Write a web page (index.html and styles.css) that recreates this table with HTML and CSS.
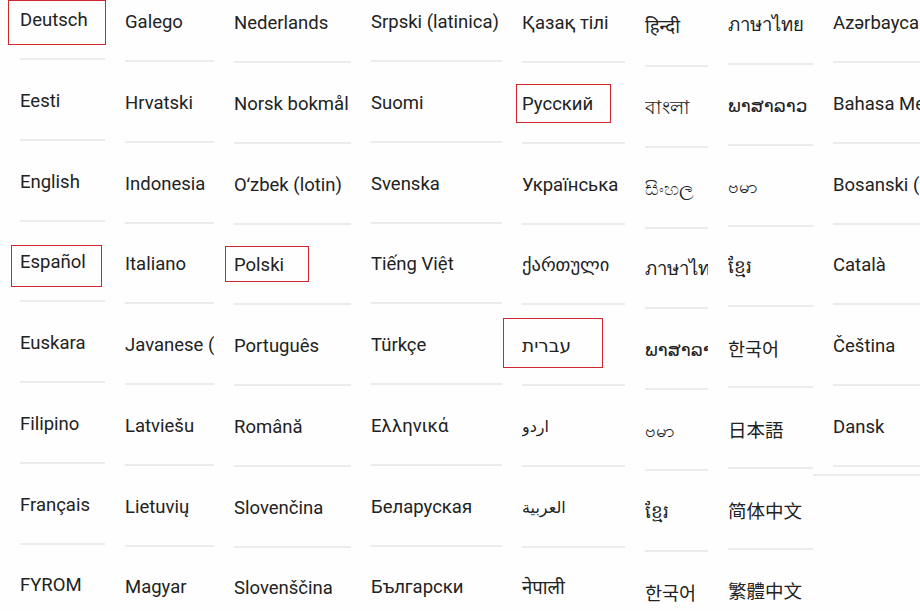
FILE: index.html
```html
<!DOCTYPE html>
<html lang="en">
<head>
<meta charset="utf-8">
<title>Languages</title>
<link rel="stylesheet" href="styles.css">
</head>
<body>
<div class="grid">
  <div class="col c1">
    <div class="row"><span class="label">Deutsch</span><span class="mark m-deutsch"></span></div>
    <div class="row"><span class="label">Eesti</span></div>
    <div class="row"><span class="label">English</span></div>
    <div class="row"><span class="label">Español</span><span class="mark m-espanol"></span></div>
    <div class="row"><span class="label">Euskara</span></div>
    <div class="row"><span class="label">Filipino</span></div>
    <div class="row"><span class="label">Français</span></div>
    <div class="row"><span class="label">FYROM</span></div>
  </div>
  <div class="col c2">
    <div class="row"><span class="label">Galego</span></div>
    <div class="row"><span class="label">Hrvatski</span></div>
    <div class="row"><span class="label">Indonesia</span></div>
    <div class="row"><span class="label">Italiano</span></div>
    <div class="row"><span class="label">Javanese (Indonesia)</span></div>
    <div class="row"><span class="label">Latviešu</span></div>
    <div class="row"><span class="label">Lietuvių</span></div>
    <div class="row"><span class="label">Magyar</span></div>
  </div>
  <div class="col c3">
    <div class="row"><span class="label">Nederlands</span></div>
    <div class="row"><span class="label">Norsk bokmål</span></div>
    <div class="row"><span class="label">Oʻzbek (lotin)</span></div>
    <div class="row"><span class="label">Polski</span><span class="mark m-polski"></span></div>
    <div class="row"><span class="label">Português</span></div>
    <div class="row"><span class="label">Română</span></div>
    <div class="row"><span class="label">Slovenčina</span></div>
    <div class="row"><span class="label">Slovenščina</span></div>
  </div>
  <div class="col c4">
    <div class="row"><span class="label">Srpski (latinica)</span></div>
    <div class="row"><span class="label">Suomi</span></div>
    <div class="row"><span class="label">Svenska</span></div>
    <div class="row"><span class="label">Tiếng Việt</span></div>
    <div class="row"><span class="label">Türkçe</span></div>
    <div class="row"><span class="label">Ελληνικά</span></div>
    <div class="row"><span class="label">Беларуская</span></div>
    <div class="row"><span class="label">Български</span></div>
  </div>
  <div class="col c5">
    <div class="row"><span class="label">Қазақ тілі</span></div>
    <div class="row"><span class="label">Русский</span><span class="mark m-russian"></span></div>
    <div class="row"><span class="label">Українська</span></div>
    <div class="row"><span class="label">ქართული</span></div>
    <div class="row"><span class="label">עברית</span><span class="mark m-hebrew"></span></div>
    <div class="row"><span class="label small">اردو</span></div>
    <div class="row"><span class="label small">العربية</span></div>
    <div class="row"><span class="label">नेपाली</span></div>
  </div>
  <div class="col c6">
    <div class="row"><span class="label">हिन्दी</span></div>
    <div class="row"><span class="label">বাংলা</span></div>
    <div class="row"><span class="label">සිංහල</span></div>
    <div class="row"><span class="label">ภาษาไทย</span></div>
    <div class="row"><span class="label lo">ພາສາລາວ</span></div>
    <div class="row"><span class="label">ဗမာ</span></div>
    <div class="row"><span class="label">ខ្មែរ</span></div>
    <div class="row"><span class="label kr">한국어</span></div>
  </div>
  <div class="col c7">
    <div class="row"><span class="label">ภาษาไทย</span></div>
    <div class="row"><span class="label lo">ພາສາລາວ</span></div>
    <div class="row"><span class="label">ဗမာ</span></div>
    <div class="row"><span class="label">ខ្មែរ</span></div>
    <div class="row"><span class="label kr">한국어</span></div>
    <div class="row"><span class="label jp">日本語</span></div>
    <div class="row"><span class="label sc">简体中文</span></div>
    <div class="row"><span class="label tc">繁體中文</span></div>
  </div>
  <div class="col c8">
    <div class="row"><span class="label">Azərbaycan</span></div>
    <div class="row"><span class="label">Bahasa Melayu</span></div>
    <div class="row"><span class="label">Bosanski (latinica)</span></div>
    <div class="row"><span class="label">Català</span></div>
    <div class="row"><span class="label">Čeština</span></div>
    <div class="row"><span class="label">Dansk</span></div>
  </div>
</div>
</body>
</html>
```
FILE: styles.css
```css
html, body {
  margin: 0;
  padding: 0;
  background: #fefefe;
  overflow: hidden;
}
body {
  width: 920px;
  height: 611px;
  font-family: Roboto, "Noto Sans", "DejaVu Sans", "Noto Sans CJK KR", sans-serif;
  font-size: 18.5px;
  color: #222222;
}
.grid {
  display: flex;
  align-items: flex-start;
  gap: 20px;
  padding-left: 20px;
}
.col {
  display: flex;
  flex-direction: column;
  flex: none;
}
.row {
  position: relative;
  box-sizing: border-box;
  height: 80.75px;
  padding-bottom: 28px;
  border-bottom: 2px solid #ececec;
  display: flex;
  align-items: flex-end;
}
.label {
  display: block;
  width: 100%;
  line-height: 20px;
  white-space: nowrap;
  overflow: hidden;
  padding: 10px 0;
  margin: -10px 0;
}
.small { font-size: 16px; }
.lo { font-family: "DejaVu Sans", "Noto Sans", sans-serif; font-weight: 400; }
.kr { font-family: "Noto Sans CJK KR", sans-serif; }
.jp { font-family: "Noto Sans CJK JP", sans-serif; }
.sc { font-family: "Noto Sans CJK SC", sans-serif; }
.tc { font-family: "Noto Sans CJK TC", sans-serif; }

.c1 { width: 85px; margin-top: -20.75px; }
.c2 { width: 89px; margin-top: -18.75px; }
.c3 { width: 117px; margin-top: -17.75px; }
.c4 { width: 131px; margin-top: -18.75px; }
.c5 { width: 103px; margin-top: -17.75px; }
.c6 { width: 63px; margin-top: -13.75px; }
.c7 { width: 85px; margin-top: -15.75px; }
.c8 {
  flex: 1;
  margin-top: -17.75px;
  margin-left: -20px;
  padding-left: 20px;
  padding-bottom: 7px;
  border-bottom: 2px solid #ececec;
}

.mark {
  position: absolute;
  box-sizing: border-box;
  border: 1px solid #d0262d;
}
.m-deutsch { left: -12px; top: 20.75px; width: 98px; height: 45px; }
.m-espanol { left: -9px; top: 23.5px; width: 91px; height: 42px; }
.m-polski { left: -9px; top: 21.5px; width: 84px; height: 36px; }
.m-russian { left: -6px; top: 21px; width: 95px; height: 39px; }
.m-hebrew { left: -19px; top: 12.75px; width: 100px; height: 50px; }
```
